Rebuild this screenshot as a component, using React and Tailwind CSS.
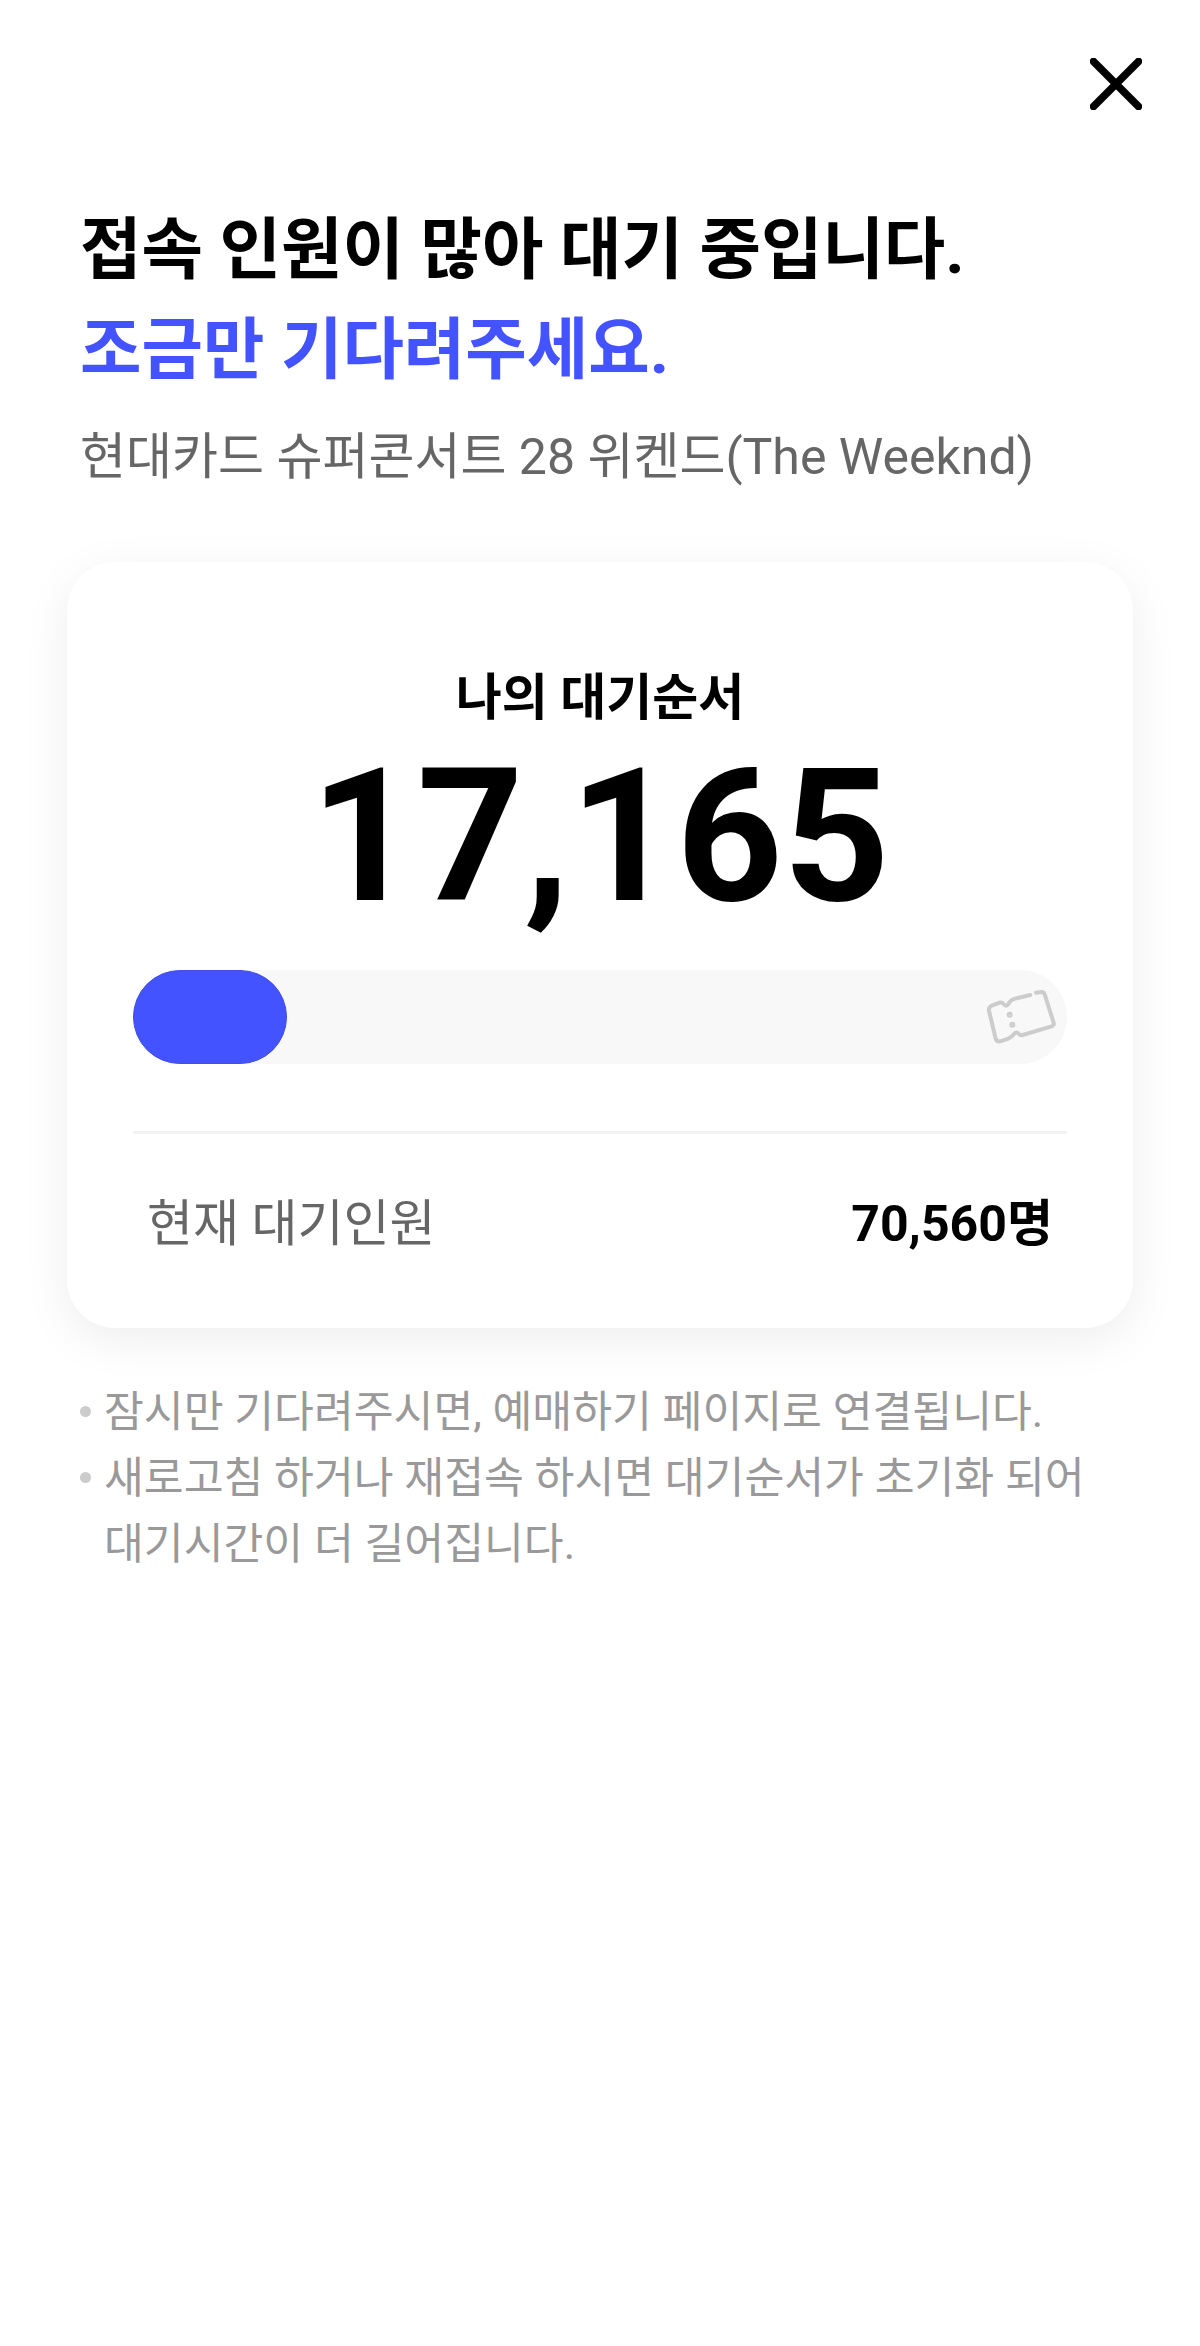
const fontStack = { fontFamily: "Roboto, 'Noto Sans CJK KR', sans-serif" };

function TicketIcon() {
  return (
    <svg width="70" height="54" viewBox="255 150 210 162" fill="none" stroke="#cccccc" strokeWidth="12" strokeLinecap="round" strokeLinejoin="round">
      <path d="M405 158 L422 156 Q429 156 431 163 L458 248 Q460 256 452 259 L365 285 Q358 287 353 281 Q346 274 340 281 Q332 292 322 296 L298 304 Q287 306 284 296 L264 212 Q262 202 272 197 L296 188 Q303 186 308 192 Q316 202 322 192 Q328 180 342 176 L388 165" />
      <circle cx="326" cy="224" r="3" fill="#cccccc" />
      <circle cx="334" cy="254" r="3" fill="#cccccc" />
    </svg>
  );
}

function Note({ children }) {
  return (
    <li className="flex">
      <span className="w-[24px] shrink-0 pt-[26px]">
        <span className="block w-[11px] h-[11px] rounded-full bg-[#cccccc]" />
      </span>
      <span>{children}</span>
    </li>
  );
}

export default function App() {
  return (
    <div className="w-[1200px] min-h-[2346px] bg-white" style={fontStack}>
      {/* Close button */}
      <div className="flex justify-end pt-[58px] pr-[58px]">
        <svg width="52" height="52" viewBox="0 0 52 52" fill="none" stroke="#000000" strokeWidth="7.5" strokeLinecap="round">
          <path d="M3.5 3.5 L48.5 48.5 M48.5 3.5 L3.5 48.5" />
        </svg>
      </div>

      {/* Heading */}
      <div className="pl-[80px] mt-[90px]">
        <h1 className="text-[66.8px] leading-[100px] font-bold text-black">접속 인원이 많아 대기 중입니다.</h1>
        <h2 className="text-[66.8px] leading-[100px] font-bold text-[#4353ff]">조금만 기다려주세요.</h2>
        <p className="mt-[21px] text-[50px] leading-[72px] text-[#666666]">현대카드 슈퍼콘서트 28 위켄드(The Weeknd)</p>
      </div>

      {/* Queue card */}
      <div className="mx-[67px] mt-[69px] h-[766px] rounded-[48px] bg-white shadow-[0_12px_48px_rgba(0,0,0,0.07)] px-[66px] pt-[106px]">
        <p className="text-center text-[50px] leading-[60px] font-bold text-black">나의 대기순서</p>
        <p className="text-center text-[186px] leading-[216px] font-bold text-black">17,165</p>
        <div className="mt-[26px] h-[94px] rounded-full bg-[#f8f8f8] flex items-center justify-between pr-[11px]">
          <div className="w-[154px] h-[94px] rounded-full bg-[#4353ff] border border-[#4150e0]" />
          <TicketIcon />
        </div>
        <div className="mt-[67px] border-t-[3px] border-[#f2f2f2] flex items-center justify-between px-[14px] pt-[60px]">
          <span className="text-[50px] leading-[60px] text-[#666666]">현재 대기인원</span>
          <span className="text-[50px] leading-[60px] font-bold text-black">70,560명</span>
        </div>
      </div>

      {/* Notes */}
      <ul className="pl-[80px] pr-[40px] mt-[52px] text-[43.3px] leading-[66px] text-[#999999]">
        <Note>잠시만 기다려주시면, 예매하기 페이지로 연결됩니다.</Note>
        <Note>새로고침 하거나 재접속 하시면 대기순서가 초기화 되어<br />대기시간이 더 길어집니다.</Note>
      </ul>
    </div>
  );
}
